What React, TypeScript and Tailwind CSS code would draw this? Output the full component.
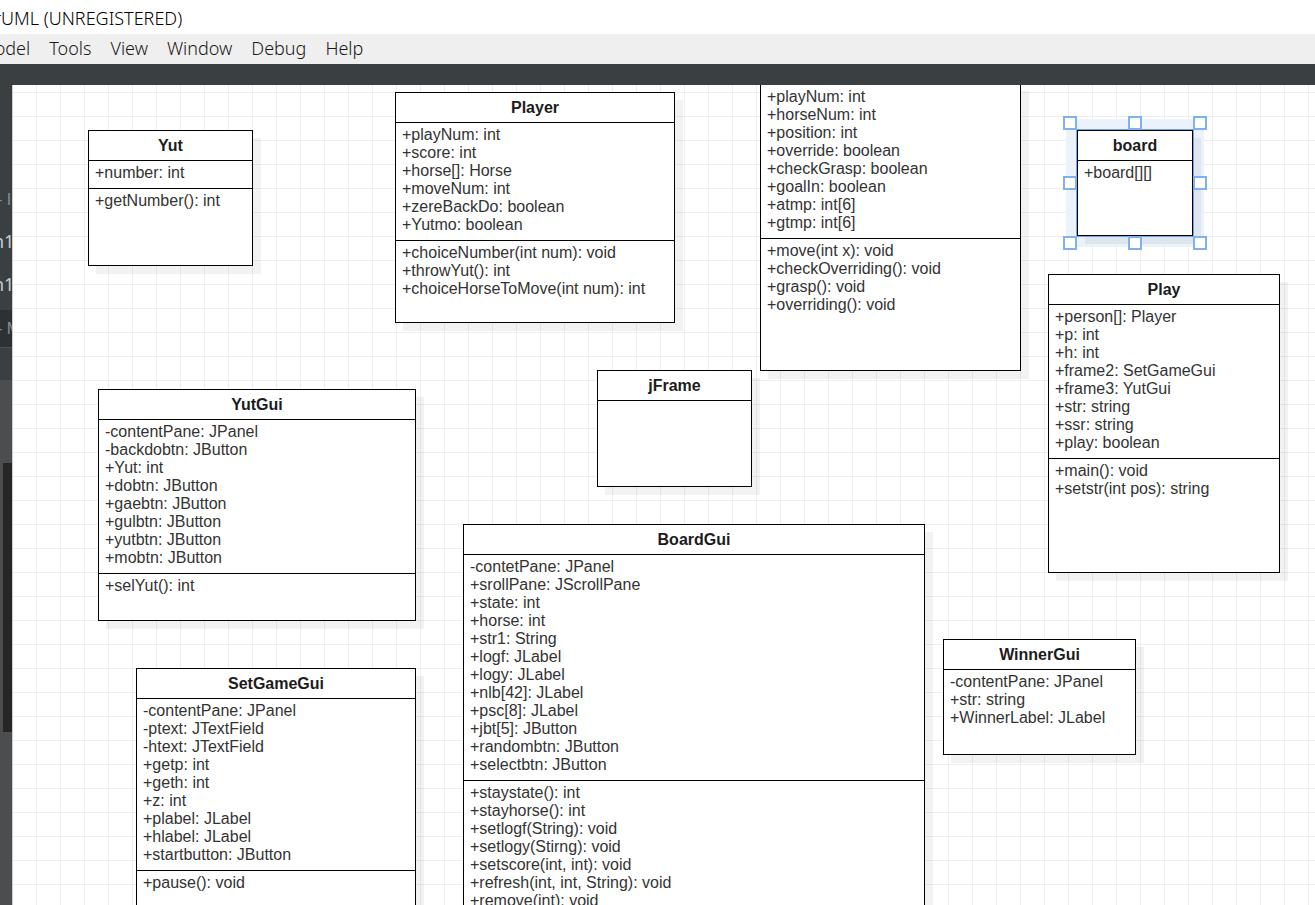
import React from "react";

type ClassNode = {
  title?: string;
  left: number;
  top: number;
  width: number;
  height: number;
  attributes: string[];
  operations?: string[];
  selected?: boolean;
};

const nodes: ClassNode[] = [
  { title: "Yut", left: 76, top: 45, width: 165, height: 136, attributes: ["+number: int"], operations: ["+getNumber(): int"] },
  {
    title: "Player", left: 383, top: 7, width: 280, height: 231,
    attributes: ["+playNum: int", "+score: int", "+horse[]: Horse", "+moveNum: int", "+zereBackDo: boolean", "+Yutmo: boolean"],
    operations: ["+choiceNumber(int num): void", "+throwYut(): int", "+choiceHorseToMove(int num): int"],
  },
  {
    left: 748, top: -2, width: 261, height: 288,
    attributes: ["+playNum: int", "+horseNum: int", "+position: int", "+override: boolean", "+checkGrasp: boolean", "+goalIn: boolean", "+atmp: int[6]", "+gtmp: int[6]"],
    operations: ["+move(int x): void", "+checkOverriding(): void", "+grasp(): void", "+overriding(): void"],
  },
  { title: "board", left: 1065, top: 45, width: 116, height: 106, attributes: ["+board[][]"], selected: true },
  {
    title: "Play", left: 1036, top: 189, width: 232, height: 299,
    attributes: ["+person[]: Player", "+p: int", "+h: int", "+frame2: SetGameGui", "+frame3: YutGui", "+str: string", "+ssr: string", "+play: boolean"],
    operations: ["+main(): void", "+setstr(int pos): string"],
  },
  {
    title: "YutGui", left: 86, top: 304, width: 318, height: 232,
    attributes: ["-contentPane: JPanel", "-backdobtn: JButton", "+Yut: int", "+dobtn: JButton", "+gaebtn: JButton", "+gulbtn: JButton", "+yutbtn: JButton", "+mobtn: JButton"],
    operations: ["+selYut(): int"],
  },
  { title: "jFrame", left: 585, top: 285, width: 155, height: 117, attributes: [] },
  {
    title: "SetGameGui", left: 124, top: 583, width: 280, height: 290,
    attributes: ["-contentPane: JPanel", "-ptext: JTextField", "-htext: JTextField", "+getp: int", "+geth: int", "+z: int", "+plabel: JLabel", "+hlabel: JLabel", "+startbutton: JButton"],
    operations: ["+pause(): void"],
  },
  {
    title: "BoardGui", left: 451, top: 439, width: 462, height: 420,
    attributes: ["-contetPane: JPanel", "+srollPane: JScrollPane", "+state: int", "+horse: int", "+str1: String", "+logf: JLabel", "+logy: JLabel", "+nlb[42]: JLabel", "+psc[8]: JLabel", "+jbt[5]: JButton", "+randombtn: JButton", "+selectbtn: JButton"],
    operations: ["+staystate(): int", "+stayhorse(): int", "+setlogf(String): void", "+setlogy(Stirng): void", "+setscore(int, int): void", "+refresh(int, int, String): void", "+remove(int): void"],
  },
  { title: "WinnerGui", left: 931, top: 554, width: 193, height: 116, attributes: ["-contentPane: JPanel", "+str: string", "+WinnerLabel: JLabel"] },
];

const handles = [
  "-left-[14px] -top-[14px]",
  "left-1/2 -top-[14px] -translate-x-1/2",
  "-right-[14px] -top-[14px]",
  "-left-[14px] top-1/2 -translate-y-1/2",
  "-right-[14px] top-1/2 -translate-y-1/2",
  "-left-[14px] -bottom-[14px]",
  "left-1/2 -bottom-[14px] -translate-x-1/2",
  "-right-[14px] -bottom-[14px]",
];

function Members({ items }: { items: string[] }) {
  return (
    <ul className="border-t border-black px-[6px] pt-[3px] pb-[6px]">
      {items.map((item) => (
        <li key={item} className="whitespace-nowrap">{item}</li>
      ))}
    </ul>
  );
}

function ClassBox({ node }: { node: ClassNode }) {
  const { title, left, top, width, height, attributes, operations, selected } = node;
  return (
    <section className="absolute" style={{ left, top, width, height }}>
      {selected && <div className="absolute -inset-[11px] bg-[#ebf2fc]" />}
      <div className="relative h-full border border-black bg-white text-base leading-[18px] text-[#333] shadow-[8px_8px_0_rgba(0,0,0,0.05)]">
        {title && <h2 className="h-[29px] text-center leading-[30px] font-bold text-[#1c1c1c]">{title}</h2>}
        <Members items={attributes} />
        {operations && <Members items={operations} />}
      </div>
      {selected && (
        <div className="absolute -inset-px border border-[#6fa5ee]">
          {handles.map((place) => (
            <span key={place} className={`absolute size-[14px] border-2 border-[#7fb0f2] bg-white ${place}`} />
          ))}
        </div>
      )}
    </section>
  );
}

export default function App() {
  return (
    <div className="flex h-screen flex-col overflow-hidden bg-[#3a3f42] font-['Liberation_Sans',sans-serif]">
      <header className="flex h-[34px] shrink-0 items-center bg-white font-['Noto_Sans',sans-serif] text-lg font-light text-black">
        <h1 className="-ml-[6px] pt-0.5 whitespace-nowrap">rUML (UNREGISTERED)</h1>
      </header>
      <nav className="flex h-[30px] shrink-0 items-center gap-[19px] bg-[#efefef] pb-0.5 font-['Noto_Sans',sans-serif] text-lg font-light text-[#1a1a1a]">
        <button className="-ml-[21px]">Model</button>
        <button>Tools</button>
        <button>View</button>
        <button>Window</button>
        <button>Debug</button>
        <button>Help</button>
      </nav>
      <div className="h-[21px] shrink-0" />
      <div className="flex min-h-0 flex-1">
        <aside className="flex w-3 shrink-0 flex-col overflow-hidden whitespace-nowrap">
          <div className="mt-[103px] h-6 text-base leading-6 text-[#8a8d8f]"><span className="-ml-[3px]">- In</span></div>
          <div className="mt-2 h-[43px] font-['Noto_Sans',sans-serif] text-lg leading-[43px] text-[#c8caca]"><span className="-ml-[7px]">n1</span></div>
          <div className="h-[47px] font-['Noto_Sans',sans-serif] text-lg leading-[43px] text-[#c8caca]"><span className="-ml-[7px]">n1</span></div>
          <div className="h-[38px] shrink-0 border-b border-[#4b4f52] bg-[#2d3133] text-base leading-[37px] text-[#8a8d8f]"><span className="-ml-[3px]">- M</span></div>
          <div className="h-8 shrink-0" />
          <div className="flex-1 bg-[#4c4d4e] pt-[83px] pl-[3px]">
            <div className="h-[269px] bg-[#252525]" />
          </div>
        </aside>
        <main className="relative flex-1 overflow-hidden bg-white bg-[linear-gradient(to_right,#eeeeee_1px,transparent_1px),linear-gradient(to_bottom,#eeeeee_1px,transparent_1px)] bg-size-[24px_24px] bg-position-[24px_7px] shadow-[inset_1px_0_0_#cccccc]">
          {nodes.map((node) => (
            <ClassBox key={`${node.left}-${node.top}`} node={node} />
          ))}
        </main>
      </div>
    </div>
  );
}
